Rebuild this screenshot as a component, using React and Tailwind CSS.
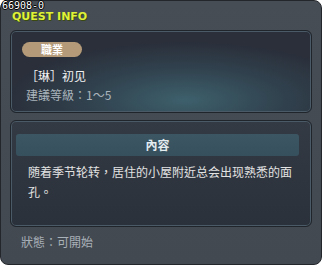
const Panel = ({ className = "", children }) => (
  <div
    className={`relative rounded-[6px] border border-[#20252c] shadow-[inset_0_0_0_1px_#4a5a66] ${className}`}
  >
    {children}
  </div>
);

export default function App() {
  return (
    <div
      className="relative h-[266px] w-[322px] bg-white"
      style={{ fontFamily: '"Noto Sans CJK TC", "Noto Sans CJK SC", "DejaVu Sans", sans-serif' }}
    >
      <div className="flex h-[265px] w-[322px] flex-col rounded-[8px] border border-[#23272c] bg-gradient-to-b from-[#474d55] to-[#434950] px-[9px] pb-[14px] pt-[29px]">
        <Panel className="h-[85px] overflow-hidden bg-[radial-gradient(ellipse_75%_90%_at_58%_85%,#3d606c_0%,#30414d_45%,#2a2f3a_80%)] px-[11px] pt-[11px]">
          <div className="flex h-[15px] w-[60px] items-center justify-center rounded-full bg-[#b49a78] text-[11px] font-bold leading-none text-white">
            職業
          </div>
          <div className="mt-[11px] pl-[4px] text-[12px] leading-[16px] text-[#f2f2f2]">［琳］初见</div>
          <div className="mt-[3px] pl-[4px] text-[12px] leading-[16px] text-[#aab4bc]">建議等級：1～5</div>
        </Panel>
        <Panel className="mt-[7px] h-[109px] bg-gradient-to-b from-[#343a44] to-[#2b313a] pl-[5px] pr-[12px] pt-[13px]">
          <div className="flex h-[22px] items-center justify-center rounded-[3px] bg-gradient-to-b from-[#3c5664] to-[#36505d] text-[12px] font-bold text-[#e4ecf0]">
            內容
          </div>
          <div className="mt-[6px] pl-[12px] text-[12px] leading-[20px] text-[#e2e2e2]">
            随着季节轮转，居住的小屋附近总会出现熟悉的面孔。
          </div>
        </Panel>
        <div className="mt-[7px] pl-[11px] text-[12px] leading-[16px] text-[#a8b0b8]">狀態：可開始</div>
      </div>
      <div
        className="absolute left-[2px] top-0 text-[10px] leading-[11px] text-white [text-shadow:1px_0_0_#000,-1px_0_0_#000,0_1px_0_#000,0_-1px_0_#000]"
        style={{ fontFamily: '"DejaVu Sans Mono", monospace' }}
      >
        66908-0
      </div>
      <div
        className="absolute left-[12px] top-[12px] text-[11px] font-bold leading-[10px] text-[#dff23a] [text-shadow:1px_1px_0_#3a4a10]"
        style={{ fontFamily: '"DejaVu Sans", sans-serif' }}
      >
        QUEST INFO
      </div>
    </div>
  );
}
